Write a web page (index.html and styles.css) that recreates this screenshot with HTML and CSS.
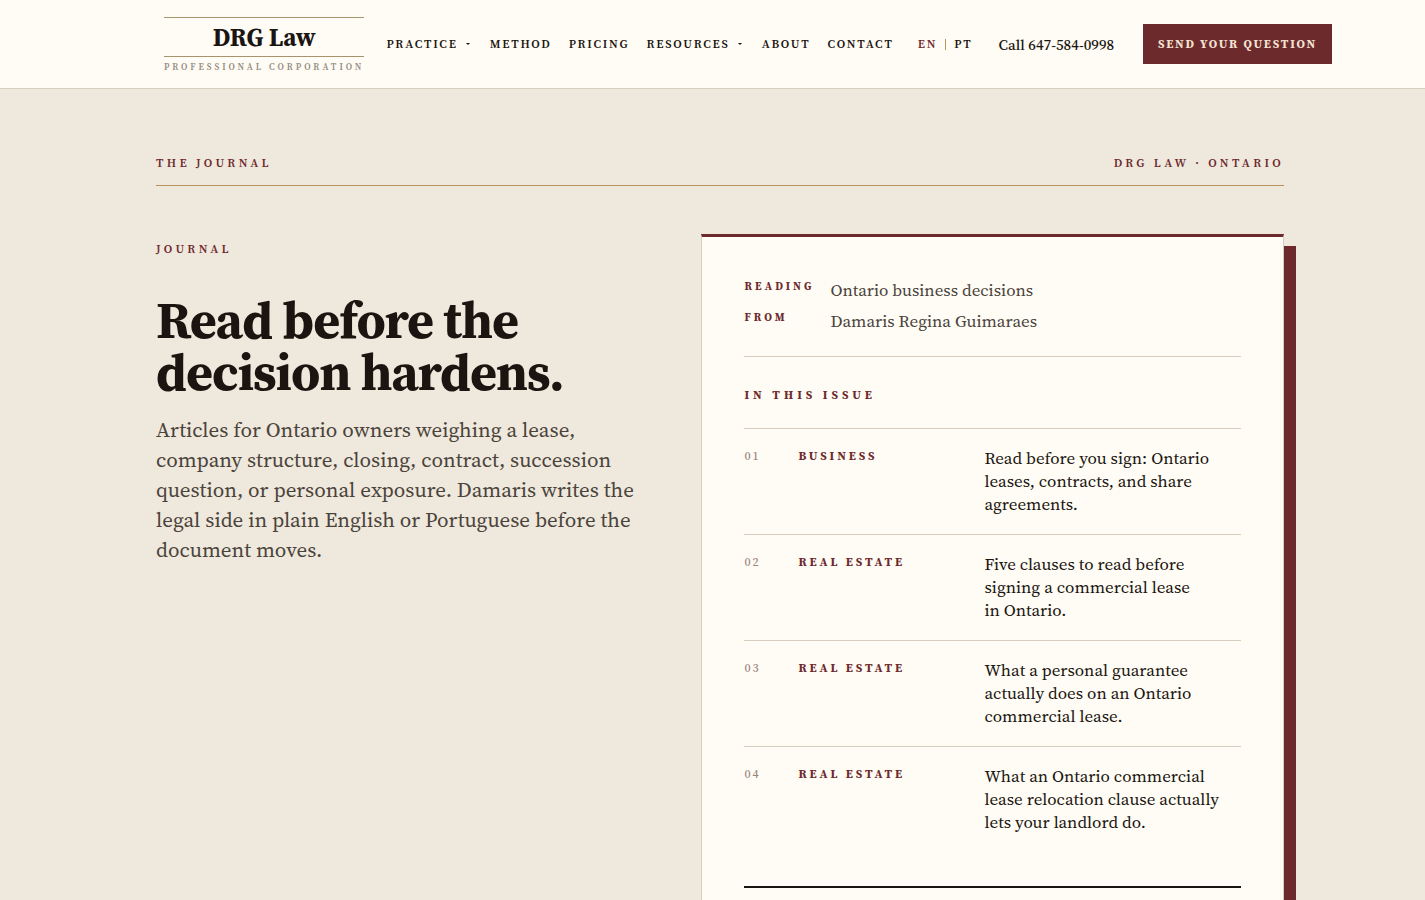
FILE: index.html
```html
<!DOCTYPE html>
<html lang="en">
<head>
    <meta charset="UTF-8">
    <meta name="viewport" content="width=device-width, initial-scale=1.0">
    <title>Journal | DRG Law</title>
    <link rel="stylesheet" href="styles.css">
</head>
<body>
    <header class="header">
        <a class="logo" href="#">
            <span class="logo-name">DRG Law</span>
            <span class="logo-sub">Professional Corporation</span>
        </a>
        <nav class="nav">
            <button class="nav-link" type="button">Practice <span class="caret"></span></button>
            <a class="nav-link" href="#">Method</a>
            <a class="nav-link" href="#">Pricing</a>
            <button class="nav-link" type="button">Resources <span class="caret"></span></button>
            <a class="nav-link" href="#">About</a>
            <a class="nav-link" href="#">Contact</a>
        </nav>
        <div class="lang">
            <a class="nav-link active" href="#">EN</a>
            <span class="lang-divider"></span>
            <a class="nav-link" href="#">PT</a>
        </div>
        <a class="phone" href="#">Call 647-584-0998</a>
        <a class="cta" href="#">Send your question</a>
    </header>

    <main class="hero">
        <div class="hero-bar">
            <span class="label">The Journal</span>
            <span class="label">DRG Law · Ontario</span>
        </div>

        <div class="hero-grid">
            <div class="intro">
                <p class="label">Journal</p>
                <h1>Read before the decision hardens.</h1>
                <p class="lead">Articles for Ontario owners weighing a lease, company structure, closing, contract, succession question, or personal exposure. Damaris writes the legal side in plain English or Portuguese before the document moves.</p>
            </div>

            <section class="issue">
                <dl class="meta">
                    <dt class="tag">Reading</dt>
                    <dd>Ontario business decisions</dd>
                    <dt class="tag">From</dt>
                    <dd>Damaris Regina Guimaraes</dd>
                </dl>
                <h2>In this issue</h2>
                <ol class="contents">
                    <li class="entry">
                        <span class="num">01</span>
                        <span class="category">Business</span>
                        <a href="#">Read before you sign: Ontario leases, contracts, and share agreements.</a>
                    </li>
                    <li class="entry">
                        <span class="num">02</span>
                        <span class="category">Real Estate</span>
                        <a href="#">Five clauses to read before signing a commercial lease in&nbsp;Ontario.</a>
                    </li>
                    <li class="entry">
                        <span class="num">03</span>
                        <span class="category">Real Estate</span>
                        <a href="#">What a personal guarantee actually does on an Ontario commercial lease.</a>
                    </li>
                    <li class="entry">
                        <span class="num">04</span>
                        <span class="category">Real Estate</span>
                        <a href="#">What an Ontario commercial lease relocation clause actually lets your landlord do.</a>
                    </li>
                </ol>
                <hr class="issue-end">
            </section>
        </div>
    </main>
</body>
</html>
```
FILE: styles.css
```css
* {
    box-sizing: border-box;
}

body {
    margin: 0;
    background-color: #efe8dc;
    color: #1a1510;
    font-family: "Source Serif 4", "Source Serif Pro", "Liberation Serif", serif;
    font-size: 17px;
    line-height: 23px;
}

a {
    color: inherit;
    text-decoration: none;
}

.header {
    display: flex;
    align-items: center;
    gap: 22px;
    height: 89px;
    padding: 0 93px 0 164px;
    background-color: #fffcf5;
    border-bottom: 1px solid #d8cebd;
    white-space: nowrap;
}

.logo {
    display: flex;
    flex-direction: column;
    text-align: center;
}

.logo-name {
    border-top: 1px solid #a8946c;
    border-bottom: 1px solid #a8946c;
    font-size: 25px;
    font-weight: bold;
    line-height: 38px;
}

.logo-sub {
    color: #948a7d;
    font-size: 9px;
    font-weight: 600;
    letter-spacing: 3px;
    line-height: 10px;
    padding-top: 5px;
    text-transform: uppercase;
}

.nav {
    display: flex;
    gap: 17px;
}

.nav-link {
    display: flex;
    align-items: center;
    padding: 0;
    border: none;
    background: none;
    color: #1a1510;
    font-family: inherit;
    font-size: 12px;
    font-weight: 600;
    letter-spacing: 0.15em;
    line-height: 20px;
    text-transform: uppercase;
    cursor: pointer;
}

.nav-link.active {
    color: #6d2a2c;
}

.caret {
    margin: 0 3px 0 8px;
    border: 2px solid transparent;
    border-top-color: #1a1510;
    border-bottom: none;
}

.lang {
    display: flex;
    align-items: center;
    gap: 8px;
    margin-left: 2px;
}

.lang-divider {
    width: 1px;
    height: 11px;
    background-color: #b8965e;
}

.phone {
    margin-left: 4px;
    font-size: 15px;
    font-weight: 500;
}

.cta {
    margin-left: auto;
    padding: 0 15px;
    background-color: #6d2a2c;
    color: #f3e3d3;
    font-size: 12px;
    font-weight: bold;
    letter-spacing: 0.15em;
    line-height: 40px;
    text-transform: uppercase;
}

.hero {
    padding: 64px 141px 64px 156px;
}

.hero-bar {
    display: flex;
    justify-content: space-between;
    padding-bottom: 12px;
    border-bottom: 1px solid #b8915f;
}

.label {
    margin: 0;
    color: #6d2a2c;
    font-size: 12px;
    font-weight: 600;
    letter-spacing: 0.28em;
    line-height: 20px;
    text-transform: uppercase;
}

.hero-grid {
    display: grid;
    grid-template-columns: 5fr 6fr;
    gap: 60px;
    padding-top: 48px;
}

.intro {
    padding-top: 5px;
}

h1 {
    margin: 35px 0 17px;
    font-size: 52px;
    letter-spacing: -1px;
    line-height: 52px;
}

.lead {
    margin: 0;
    color: #4a433b;
    font-size: 21px;
    line-height: 30px;
}

.issue {
    padding: 42px;
    background-color: #fffcf5;
    border: 1px solid #d8cebd;
    border-top: 3px solid #6d2a2c;
    box-shadow: 12px 12px 0 #6d2a2c;
}

.meta {
    display: grid;
    grid-template-columns: 70px 1fr;
    gap: 8px 16px;
    margin: 0;
    padding-bottom: 23px;
    border-bottom: 1px solid #d8cebd;
    color: #4a433b;
}

.meta dd {
    margin: 0;
}

.tag {
    color: #6d2a2c;
    font-size: 11px;
    font-weight: bold;
    letter-spacing: 0.28em;
    line-height: 16px;
    text-transform: uppercase;
}

h2 {
    margin: 28px 0 23px;
    color: #6d2a2c;
    font-size: 12px;
    letter-spacing: 4px;
    line-height: 20px;
    text-transform: uppercase;
}

.contents {
    margin: 0;
    padding: 0;
    list-style: none;
}

.entry {
    display: grid;
    grid-template-columns: 38px 170px 1fr;
    gap: 16px;
    padding: 18px 0;
    border-top: 1px solid #d8cebd;
}

.num,
.category {
    font-size: 12px;
    line-height: 18px;
}

.num {
    color: #9c8580;
    font-weight: 500;
    letter-spacing: 2px;
}

.category {
    color: #6d2a2c;
    font-weight: bold;
    letter-spacing: 0.24em;
    text-transform: uppercase;
}

.issue-end {
    margin: 34px 0 0;
    border: none;
    border-top: 2px solid #1a1510;
}
```
